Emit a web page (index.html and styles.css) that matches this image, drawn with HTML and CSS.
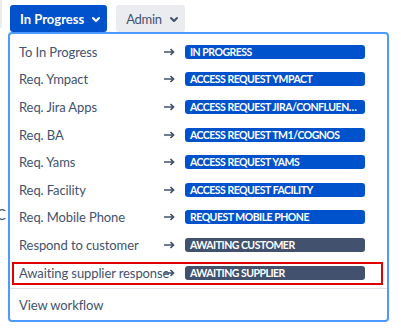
FILE: index.html
```html
<!DOCTYPE html>
<html lang="en">

<head>
    <meta charset="UTF-8">
    <meta name="viewport" content="width=device-width, initial-scale=1.0">
    <title>Transition menu</title>
    <link rel="stylesheet" href="styles.css">
</head>

<body>
    <div class="toolbar">
        <div class="prev-btn"></div>

        <div class="dropdown">
            <button class="btn btn-primary">
                In Progress
                <svg class="chevron" width="24" height="24" viewBox="0 0 24 24">
                    <path d="M8.292 10.293a1.009 1.009 0 000 1.419l2.939 2.965c.218.215.5.322.779.322s.556-.107.769-.322l2.93-2.955a1.01 1.01 0 000-1.419.987.987 0 00-1.406 0l-2.298 2.317-2.307-2.327a.99.99 0 00-1.406 0z" fill="currentColor"/>
                </svg>
            </button>

            <div class="menu">
                <ul class="menu-list">
                    <li class="item">
                        <span class="item-name">To In Progress</span>
                        <span class="arrow"><svg width="11" height="8" viewBox="0 0 11 8"><path d="M0 4h9.5M6.5 1l3 3-3 3" /></svg></span>
                        <span class="lozenge">In Progress</span>
                    </li>
                    <li class="item">
                        <span class="item-name">Req. Ympact</span>
                        <span class="arrow"><svg width="11" height="8" viewBox="0 0 11 8"><path d="M0 4h9.5M6.5 1l3 3-3 3" /></svg></span>
                        <span class="lozenge">Access request Ympact</span>
                    </li>
                    <li class="item">
                        <span class="item-name">Req. Jira Apps</span>
                        <span class="arrow"><svg width="11" height="8" viewBox="0 0 11 8"><path d="M0 4h9.5M6.5 1l3 3-3 3" /></svg></span>
                        <span class="lozenge">Access request Jira/Confluence</span>
                    </li>
                    <li class="item">
                        <span class="item-name">Req. BA</span>
                        <span class="arrow"><svg width="11" height="8" viewBox="0 0 11 8"><path d="M0 4h9.5M6.5 1l3 3-3 3" /></svg></span>
                        <span class="lozenge">Access request TM1/Cognos</span>
                    </li>
                    <li class="item">
                        <span class="item-name">Req. Yams</span>
                        <span class="arrow"><svg width="11" height="8" viewBox="0 0 11 8"><path d="M0 4h9.5M6.5 1l3 3-3 3" /></svg></span>
                        <span class="lozenge">Access request Yams</span>
                    </li>
                    <li class="item">
                        <span class="item-name">Req. Facility</span>
                        <span class="arrow"><svg width="11" height="8" viewBox="0 0 11 8"><path d="M0 4h9.5M6.5 1l3 3-3 3" /></svg></span>
                        <span class="lozenge">Access request Facility</span>
                    </li>
                    <li class="item">
                        <span class="item-name">Req. Mobile Phone</span>
                        <span class="arrow"><svg width="11" height="8" viewBox="0 0 11 8"><path d="M0 4h9.5M6.5 1l3 3-3 3" /></svg></span>
                        <span class="lozenge">Request mobile phone</span>
                    </li>
                    <li class="item">
                        <span class="item-name">Respond to customer</span>
                        <span class="arrow"><svg width="11" height="8" viewBox="0 0 11 8"><path d="M0 4h9.5M6.5 1l3 3-3 3" /></svg></span>
                        <span class="lozenge lozenge-grey">Awaiting customer</span>
                    </li>
                    <li class="item item-marked">
                        <span class="item-name">Awaiting supplier response</span>
                        <span class="arrow"><svg width="11" height="8" viewBox="0 0 11 8"><path d="M0 4h9.5M6.5 1l3 3-3 3" /></svg></span>
                        <span class="lozenge lozenge-grey">Awaiting supplier</span>
                    </li>
                </ul>
                <div class="menu-footer">
                    <div class="item">View workflow</div>
                </div>
            </div>
        </div>

        <button class="btn btn-default">
            Admin
            <svg class="chevron" width="24" height="24" viewBox="0 0 24 24">
                <path d="M8.292 10.293a1.009 1.009 0 000 1.419l2.939 2.965c.218.215.5.322.779.322s.556-.107.769-.322l2.93-2.955a1.01 1.01 0 000-1.419.987.987 0 00-1.406 0l-2.298 2.317-2.307-2.327a.99.99 0 00-1.406 0z" fill="currentColor"/>
            </svg>
        </button>
    </div>

    <div class="page-content">
        <p>C</p>
    </div>
</body>

</html>
```

FILE: styles.css
```css
html,
body {
    height: 100%;
}

body {
    font-family: Lato, "Noto Sans", sans-serif;
    font-size: 13px;
    color: #42526e;
    background-color: white;
    margin: 0;
    padding: 0;
    min-height: 331px;
}

.toolbar {
    display: flex;
    align-items: flex-start;
    padding-top: 5px;
}

.prev-btn {
    width: 2px;
    height: 28px;
    margin-top: -5px;
    background-color: #ebecf0;
}

.dropdown {
    position: relative;
    margin-left: 8px;
}

.btn {
    display: flex;
    align-items: center;
    height: 27px;
    border: none;
    border-radius: 3px;
    font-family: Lato, "Noto Sans", sans-serif;
    font-size: 13px;
    cursor: pointer;
}

.btn-primary {
    background-color: #0052cc;
    color: white;
    font-weight: bold;
    padding: 0 0 0 10px;
}

.btn-primary .chevron {
    margin-right: -1px;
}

.btn-default {
    background-color: #ebecf0;
    color: #42526e;
    padding: 0 0 0 10px;
    margin-left: 9px;
    letter-spacing: -0.3px;
}

.btn-default .chevron {
    margin-left: 0;
    margin-right: -1px;
}

/* transition menu */
.menu {
    position: absolute;
    top: 27px;
    left: -2px;
    width: 377px;
    background-color: white;
    border: 2px solid #4c9aff;
    border-radius: 4px;
    z-index: 2;
}

.menu-list {
    list-style-type: none;
    margin: 0;
    padding: 4px 0 2px;
}

.item {
    position: relative;
    display: flex;
    align-items: center;
    height: 27.6px;
    padding-left: 9px;
    white-space: nowrap;
    letter-spacing: -0.1px;
}

.item-name {
    width: 145px;
    flex-shrink: 0;
}

.arrow {
    width: 21px;
    flex-shrink: 0;
    display: flex;
}

.arrow path {
    fill: none;
    stroke: #42526e;
    stroke-width: 1.7;
}

.lozenge {
    width: 180px;
    box-sizing: border-box;
    height: 14px;
    line-height: 14px;
    padding: 0 5px;
    border-radius: 3px;
    background-color: #0052cc;
    color: white;
    font-size: 10.5px;
    font-weight: bold;
    letter-spacing: -0.5px;
    text-transform: uppercase;
    overflow: hidden;
    text-overflow: ellipsis;
}

.lozenge-grey {
    background-color: #42526e;
}

.item-marked::after {
    content: "";
    position: absolute;
    top: 3px;
    right: 4px;
    bottom: 1px;
    left: 2px;
    border: 2px solid #e00000;
}

.menu-footer {
    border-top: 1px solid #dfe1e6;
    padding: 2px 0 1px;
}

.page-content {
    padding-top: 173px;
}

.page-content p {
    margin: 0 0 0 -4px;
    font-size: 15px;
}
```
